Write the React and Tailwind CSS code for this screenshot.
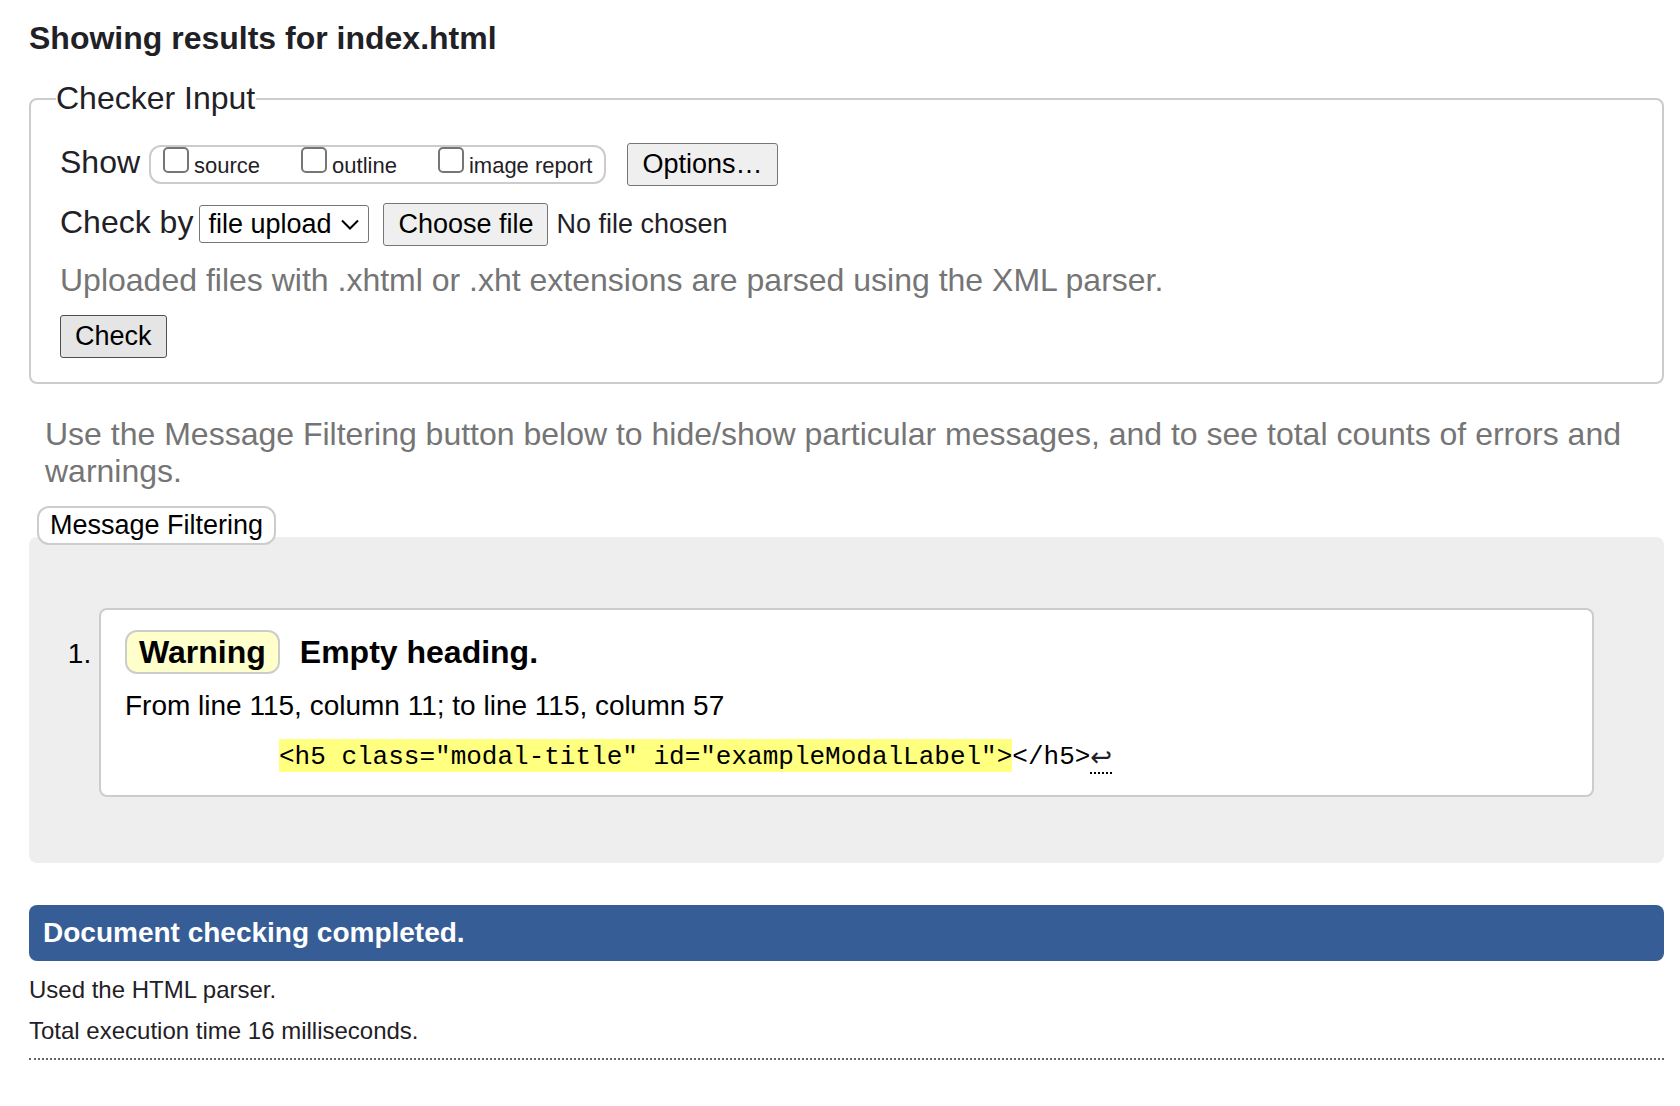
import React from "react";

const buttonBase =
  "rounded-[3px] border px-[14px] py-[5px] text-[27px] leading-[31px] text-black cursor-default";

function ShowOption({ id, label }) {
  return (
    <label htmlFor={id} className="flex items-baseline gap-[5px]">
      <input
        id={id}
        type="checkbox"
        className="h-[26px] w-[26px] appearance-none rounded-[5px] border-2 border-[#767676] bg-white checked:bg-[#0075ff]"
      />
      <span>{label}</span>
    </label>
  );
}

function CheckerInput() {
  return (
    <fieldset className="mt-[23px] rounded-lg border-2 border-[#ccc] pb-6 pl-[25px] pr-6">
      <legend className="pr-px">Checker Input</legend>
      <div className="flex flex-col items-start pl-1 pt-[26px]">
        <div className="flex items-baseline">
          <span>Show</span>
          <div className="ml-[9px] flex items-baseline gap-[41px] rounded-xl border-2 border-[#ccc] px-3 pb-px text-[22px] leading-[30px]">
            <ShowOption id="show-source" label="source" />
            <ShowOption id="show-outline" label="outline" />
            <ShowOption id="show-image-report" label="image report" />
          </div>
          <button type="button" className={`${buttonBase} ml-[21px] border-[#767676] bg-[#efefef]`}>
            Options…
          </button>
        </div>
        <div className="mt-[17px] flex items-baseline">
          <label htmlFor="check-by">Check by</label>
          <div className="relative ml-[6px] flex items-baseline">
            <select
              id="check-by"
              className="w-[170px] appearance-none rounded-[3px] border border-[#767676] bg-white py-[3px] pl-2 text-[27px] leading-[30px] text-black"
            >
              <option>file upload</option>
              <option>address</option>
              <option>text input</option>
            </select>
            <svg
              className="pointer-events-none absolute right-[9px] top-[14px] h-[12px] w-[20px]"
              viewBox="0 0 20 12"
              fill="none"
              stroke="#000"
              strokeWidth="2"
            >
              <path d="M2 1.5l8 8 8-8" />
            </svg>
          </div>
          <input id="file" type="file" className="peer sr-only" />
          <label htmlFor="file" className={`${buttonBase} ml-[14px] border-[#767676] bg-[#efefef]`}>
            Choose file
          </label>
          <span className="ml-2 text-[27px]">No file chosen</span>
        </div>
        <p className="mt-4 text-[#757575]">
          Uploaded files with .xhtml or .xht extensions are parsed using the XML parser.
        </p>
        <button type="submit" className={`${buttonBase} mt-4 border-[#4f4f4f] bg-[#e5e5e5]`}>
          Check
        </button>
      </div>
    </fieldset>
  );
}

function Results() {
  return (
    <section>
      <p className="ml-4 mt-8 text-[#757575]">
        Use the Message Filtering button below to hide/show particular messages, and to see total
        counts of errors and warnings.
      </p>
      <button
        type="button"
        className="relative z-10 ml-2 mt-4 block rounded-xl border-2 border-[#ccc] bg-white px-[11px] py-[2px] text-[27px] leading-[31px] text-black"
      >
        Message Filtering
      </button>
      <ol className="-mt-2 list-decimal rounded-lg bg-[#eee] px-[70px] pb-[66px] pt-[71px] text-[28px] leading-8 text-black">
        <li className="rounded-lg border-2 border-[#ccc] bg-white px-6 pb-[21px] pt-5">
          <p className="text-[32px] font-bold leading-[37px]">
            <strong className="mr-5 inline-block rounded-xl border-2 border-[#ccc] bg-[#ffffcc] px-3 pb-px pt-[2px]">
              Warning
            </strong>
            <span>Empty heading.</span>
          </p>
          <p className="mt-4">From line 115, column 11; to line 115, column 57</p>
          <p className="mt-[17px] flex items-start pl-[154px] font-['Liberation_Mono',monospace] text-[26px] leading-[30px]">
            <code className="bg-[#ffff80] pt-[3px] font-[inherit]">
              {'<h5 class="modal-title" id="exampleModalLabel">'}
            </code>
            <code className="pt-[3px] font-[inherit]">{"</h5>"}</code>
            <span
              title="Line break"
              className="border-b-2 border-dotted border-black pt-[3px] font-['DejaVu_Sans',sans-serif] text-[#1f2126]"
            >
              ↩
            </span>
          </p>
        </li>
      </ol>
    </section>
  );
}

export default function App() {
  return (
    <main className="bg-white pb-11 pl-[29px] pr-4 pt-5 font-['Liberation_Sans',Arial,sans-serif] text-[32px] leading-[37px] text-[#1f2126]">
      <h1 className="font-bold">Showing results for index.html</h1>
      <form onSubmit={(event) => event.preventDefault()}>
        <CheckerInput />
      </form>
      <Results />
      <p className="mt-[42px] rounded-lg bg-[#365d95] px-[14px] py-3 text-[28px] font-bold leading-8 text-white">
        Document checking completed.
      </p>
      <p className="mt-[15px] text-2xl leading-7">Used the HTML parser.</p>
      <p className="mt-[13px] text-2xl leading-7">Total execution time 16 milliseconds.</p>
      <hr className="mt-[13px] border-t-2 border-dotted border-[#666]" />
    </main>
  );
}
